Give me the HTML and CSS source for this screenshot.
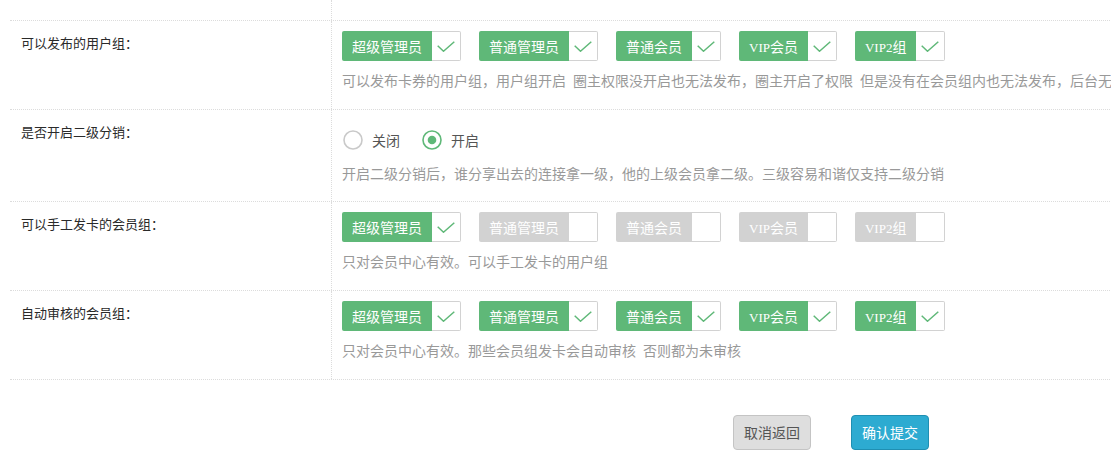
FILE: index.html
```html
<!DOCTYPE html>
<html lang="zh-CN">
<head>
<meta charset="utf-8">
<title>会员组设置</title>
<link rel="stylesheet" href="styles.css">
</head>
<body>
<div class="page">
  <div class="form-table">
    <div class="row row-top"><div class="label"></div><div class="field"></div></div>

    <div class="row">
      <div class="label">可以发布的用户组：</div>
      <div class="field">
        <div class="switches">
          <div class="switch on"><span class="sw-text">超级管理员</span><i class="sw-box"><svg width="18" height="11" viewBox="0 0 18 11"><polyline points="0.7,4.8 6.5,10.2 17.3,0.7" fill="none" stroke="#5fb878" stroke-width="1.5"/></svg></i></div>
          <div class="switch on"><span class="sw-text">普通管理员</span><i class="sw-box"><svg width="18" height="11" viewBox="0 0 18 11"><polyline points="0.7,4.8 6.5,10.2 17.3,0.7" fill="none" stroke="#5fb878" stroke-width="1.5"/></svg></i></div>
          <div class="switch on"><span class="sw-text">普通会员</span><i class="sw-box"><svg width="18" height="11" viewBox="0 0 18 11"><polyline points="0.7,4.8 6.5,10.2 17.3,0.7" fill="none" stroke="#5fb878" stroke-width="1.5"/></svg></i></div>
          <div class="switch on"><span class="sw-text"><span class="latin">VIP</span>会员</span><i class="sw-box"><svg width="18" height="11" viewBox="0 0 18 11"><polyline points="0.7,4.8 6.5,10.2 17.3,0.7" fill="none" stroke="#5fb878" stroke-width="1.5"/></svg></i></div>
          <div class="switch on"><span class="sw-text"><span class="latin">VIP2</span>组</span><i class="sw-box"><svg width="18" height="11" viewBox="0 0 18 11"><polyline points="0.7,4.8 6.5,10.2 17.3,0.7" fill="none" stroke="#5fb878" stroke-width="1.5"/></svg></i></div>
        </div>
        <div class="help">可以发布卡券的用户组，用户组开启&ensp;圈主权限没开启也无法发布，圈主开启了权限&ensp;但是没有在会员组内也无法发布，后台无</div>
      </div>
    </div>

    <div class="row">
      <div class="label">是否开启二级分销：</div>
      <div class="field">
        <div class="radios">
          <div class="radio"><svg width="20" height="20" viewBox="0 0 20 20"><circle cx="10" cy="10" r="9" fill="#fff" stroke="#c9c9c9" stroke-width="1.6"/></svg><span>关闭</span></div>
          <div class="radio"><svg width="20" height="20" viewBox="0 0 20 20"><circle cx="10" cy="10" r="9" fill="#fff" stroke="#5fb878" stroke-width="1.6"/><circle cx="10" cy="10" r="4.3" fill="#5fb878"/></svg><span>开启</span></div>
        </div>
        <div class="help help-radio">开启二级分销后，谁分享出去的连接拿一级，他的上级会员拿二级。三级容易和谐仅支持二级分销</div>
      </div>
    </div>

    <div class="row">
      <div class="label">可以手工发卡的会员组：</div>
      <div class="field">
        <div class="switches">
          <div class="switch on"><span class="sw-text">超级管理员</span><i class="sw-box"><svg width="18" height="11" viewBox="0 0 18 11"><polyline points="0.7,4.8 6.5,10.2 17.3,0.7" fill="none" stroke="#5fb878" stroke-width="1.5"/></svg></i></div>
          <div class="switch off"><span class="sw-text">普通管理员</span><i class="sw-box"></i></div>
          <div class="switch off"><span class="sw-text">普通会员</span><i class="sw-box"></i></div>
          <div class="switch off"><span class="sw-text"><span class="latin">VIP</span>会员</span><i class="sw-box"></i></div>
          <div class="switch off"><span class="sw-text"><span class="latin">VIP2</span>组</span><i class="sw-box"></i></div>
        </div>
        <div class="help">只对会员中心有效。可以手工发卡的用户组</div>
      </div>
    </div>

    <div class="row">
      <div class="label">自动审核的会员组：</div>
      <div class="field">
        <div class="switches">
          <div class="switch on"><span class="sw-text">超级管理员</span><i class="sw-box"><svg width="18" height="11" viewBox="0 0 18 11"><polyline points="0.7,4.8 6.5,10.2 17.3,0.7" fill="none" stroke="#5fb878" stroke-width="1.5"/></svg></i></div>
          <div class="switch on"><span class="sw-text">普通管理员</span><i class="sw-box"><svg width="18" height="11" viewBox="0 0 18 11"><polyline points="0.7,4.8 6.5,10.2 17.3,0.7" fill="none" stroke="#5fb878" stroke-width="1.5"/></svg></i></div>
          <div class="switch on"><span class="sw-text">普通会员</span><i class="sw-box"><svg width="18" height="11" viewBox="0 0 18 11"><polyline points="0.7,4.8 6.5,10.2 17.3,0.7" fill="none" stroke="#5fb878" stroke-width="1.5"/></svg></i></div>
          <div class="switch on"><span class="sw-text"><span class="latin">VIP</span>会员</span><i class="sw-box"><svg width="18" height="11" viewBox="0 0 18 11"><polyline points="0.7,4.8 6.5,10.2 17.3,0.7" fill="none" stroke="#5fb878" stroke-width="1.5"/></svg></i></div>
          <div class="switch on"><span class="sw-text"><span class="latin">VIP2</span>组</span><i class="sw-box"><svg width="18" height="11" viewBox="0 0 18 11"><polyline points="0.7,4.8 6.5,10.2 17.3,0.7" fill="none" stroke="#5fb878" stroke-width="1.5"/></svg></i></div>
        </div>
        <div class="help">只对会员中心有效。那些会员组发卡会自动审核&ensp;否则都为未审核</div>
      </div>
    </div>
  </div>

  <div class="actions">
    <button class="btn btn-cancel" type="button">取消返回</button>
    <button class="btn btn-submit" type="button">确认提交</button>
  </div>
</div>
</body>
</html>
```

FILE: styles.css
```css
html, body {
  margin: 0;
  padding: 0;
  background: #fff;
  overflow: hidden;
}

body {
  font-family: "Noto Sans CJK SC", "Liberation Sans", sans-serif;
  font-size: 14px;
  color: #333;
}

.page {
  width: 1500px;
}

.form-table {
  margin-left: 10px;
  width: 1400px;
}

.row {
  display: flex;
  border-bottom: 1px dotted #dcdcdc;
}

.row-top {
  height: 20px;
}

.label {
  flex: none;
  border-right: 1px dotted #dcdcdc;
  box-sizing: border-box;
  width: 322px;
  padding: 11px 11px 0;
  font-size: 13px;
  line-height: 22px;
  color: #2a2a2a;
}

.field {
  flex: 1;
  padding: 10px 10px 19px;
}

.row-top .field {
  padding: 0;
}

.switches {
  display: flex;
  gap: 18px;
  height: 30px;
}

.switch {
  display: flex;
  height: 30px;
}

.sw-text {
  display: block;
  background: #5fb878;
  color: #fff;
  padding: 0 10px;
  line-height: 30px;
  font-size: 14px;
  border-radius: 2px 0 0 2px;
  white-space: nowrap;
}

.latin {
  font-family: "Liberation Serif", serif;
  font-size: 13px;
}

.switch.off .sw-text {
  background: #d2d2d2;
}

.sw-box {
  display: flex;
  align-items: center;
  justify-content: center;
  width: 28px;
  height: 28px;
  border: 1px solid #d2d2d2;
  border-left: none;
  border-radius: 0 2px 2px 0;
  background: #fff;
}

.help {
  margin-top: 9px;
  line-height: 20px;
  font-size: 14px;
  color: #999;
  white-space: nowrap;
}

.radios {
  display: flex;
  align-items: center;
  height: 28px;
  margin-top: 6px;
}

.radio {
  display: flex;
  align-items: center;
  gap: 9px;
  margin-right: 21px;
  color: #555;
  font-size: 14px;
  padding-left: 1px;
}

.radio svg {
  display: block;
}

.help-radio {
  margin-top: 9px;
}

.row:nth-child(3) .field {
  padding-bottom: 18px;
}

.actions {
  display: flex;
  gap: 40px;
  padding-left: 733px;
  margin-top: 35px;
}

.btn {
  font-family: "Noto Sans CJK SC", "Liberation Sans", sans-serif;
  font-size: 14px;
  line-height: 21px;
  padding: 6px 10px;
  border-radius: 4px;
  border: 1px solid;
  cursor: pointer;
}

.btn-cancel {
  background: #dedede;
  border-color: #c4c4c4;
  color: #555;
}

.btn-submit {
  background: #2dabd1;
  border-color: #1f8fb2;
  color: #fff;
}
```
